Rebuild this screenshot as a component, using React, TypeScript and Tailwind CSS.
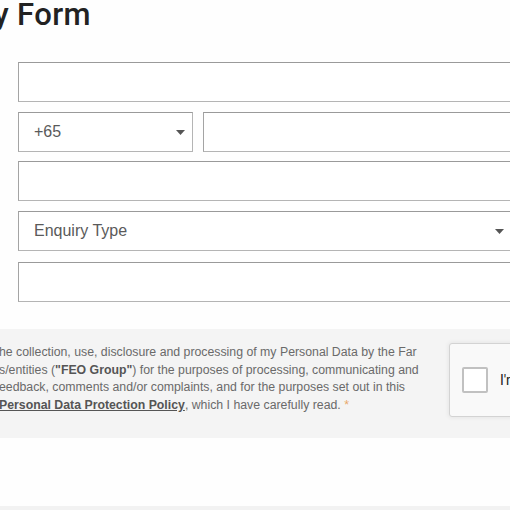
const field =
  "h-[40px] border border-[#b4b4b4] border-t-[#9a9a9a] border-l-[#a4a4a4] bg-white";

function Caret() {
  return (
    <svg width="9" height="5" viewBox="0 0 9 5" className="shrink-0">
      <path d="M0 0h9L4.5 5z" fill="#555" />
    </svg>
  );
}

function SelectBox({ label, className }: { label: string; className: string }) {
  return (
    <div className={`${field} ${className} flex items-center justify-between pl-[15px] pr-[7px]`}>
      <span className="text-[16px] text-[#5a5a5a]">{label}</span>
      <Caret />
    </div>
  );
}

export default function App() {
  return (
    <div
      className="relative h-[510px] w-[510px] overflow-hidden bg-[#fefefe]"
      style={{ fontFamily: '"Liberation Sans", Arial, sans-serif' }}
    >
      {/* title, left part scrolled off the viewport */}
      <div className="flex w-[91px] justify-end whitespace-nowrap">
        <h1
          className="text-[31px] leading-[30px] font-medium tracking-[0.4px] text-[#222]"
          style={{ fontFamily: "Roboto, Arial, sans-serif" }}
        >
          Enquiry Form
        </h1>
      </div>

      <form className="ml-[18px] mt-[32px] w-[560px] flex flex-col">
        <input className={`${field} w-full`} aria-label="Name" />
        <div className="mt-[10px] flex gap-[10px]">
          <SelectBox label="+65" className="w-[175px] shrink-0" />
          <input className={`${field} min-w-0 flex-1`} aria-label="Phone" />
        </div>
        <input className={`${field} mt-[9px] w-full`} aria-label="Email" />
        <SelectBox label="Enquiry Type" className="mt-[10px] w-[494px]" />
        <input className={`${field} mt-[11px] w-full`} aria-label="Message" />
      </form>

      <section className="mt-[27px] flex h-[109px] items-start bg-[#f4f4f4] pt-[15px]">
        <p className="w-[450px] shrink-0 whitespace-nowrap text-[12.3px] leading-[17.7px] text-[#6a6a6a] -ml-[1px]">
          he collection, use, disclosure and processing of my Personal Data by the Far
          <br />
          s/entities (<b className="text-[#555]">"FEO Group"</b>) for the purposes of processing, communicating and
          <br />
          eedback, comments and/or complaints, and for the purposes set out in this
          <br />
          <a className="font-bold text-[#555] underline">Personal Data Protection Policy</a>, which I have carefully
          read. <span className="text-[#e8a86a]">*</span>
        </p>
        <div className="-mt-[1px] flex h-[74px] w-[300px] shrink-0 items-center rounded-[3px] border border-[#d3d3d3] bg-[#f9f9f9] pl-[12px] shadow-[0_0_4px_1px_rgba(0,0,0,0.06)]">
          <span className="h-[26px] w-[26px] rounded-[2px] border-2 border-[#c1c1c1] bg-white" />
          <span
            className="ml-[12px] text-[14px] text-[#222]"
            style={{ fontFamily: "Roboto, sans-serif" }}
          >
            I'm not a robot
          </span>
        </div>
      </section>

      <div className="absolute bottom-0 left-0 h-[4px] w-full bg-[#f2f2f2]" />
    </div>
  );
}
